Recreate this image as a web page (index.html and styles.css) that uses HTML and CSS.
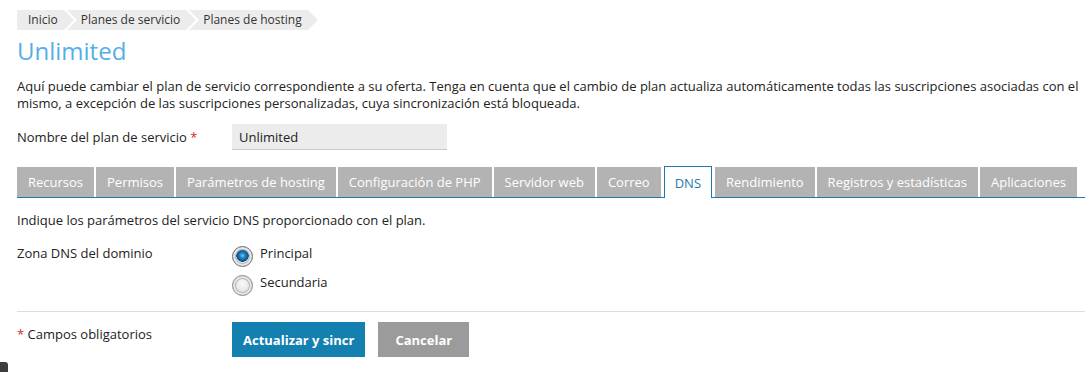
FILE: index.html
```html
<!DOCTYPE html>
<html lang="es">
<head>
    <meta charset="UTF-8">
    <title>Unlimited</title>
    <link rel="stylesheet" href="styles.css">
</head>
<body>
    <div class="page">
        <ul class="breadcrumbs">
            <li>Inicio</li>
            <li>Planes de servicio</li>
            <li>Planes de hosting</li>
        </ul>
        <h1>Unlimited</h1>
        <p class="hint">Aquí puede cambiar el plan de servicio correspondiente a su oferta. Tenga en cuenta que el cambio de plan actualiza automáticamente todas las suscripciones asociadas con el mismo, a excepción de las suscripciones personalizadas, cuya sincronización está bloqueada.</p>

        <div class="form-row name-row">
            <div class="field-label">Nombre del plan de servicio <span class="required">*</span></div>
            <div class="field"><input class="text-input" type="text" value="Unlimited"></div>
        </div>

        <div class="tabs">
            <div class="tab">Recursos</div>
            <div class="tab">Permisos</div>
            <div class="tab">Parámetros de hosting</div>
            <div class="tab">Configuración de PHP</div>
            <div class="tab">Servidor web</div>
            <div class="tab">Correo</div>
            <div class="tab active">DNS</div>
            <div class="tab">Rendimiento</div>
            <div class="tab">Registros y estadísticas</div>
            <div class="tab">Aplicaciones</div>
        </div>

        <p class="section-hint">Indique los parámetros del servicio DNS proporcionado con el plan.</p>

        <div class="form-row dns-row">
            <div class="field-label">Zona DNS del dominio</div>
            <div class="field radios">
                <label class="radio"><span class="radio-dot checked"></span>Principal</label>
                <label class="radio"><span class="radio-dot"></span>Secundaria</label>
            </div>
        </div>

        <div class="form-footer">
            <div class="field-label"><span class="required">*</span> Campos obligatorios</div>
            <div class="buttons">
                <button class="btn btn-primary">Actualizar y sincr</button>
                <button class="btn btn-cancel">Cancelar</button>
            </div>
        </div>
    </div>
    <div class="corner"></div>
</body>
</html>
```

FILE: styles.css
```css
body {
    margin: 0;
    font-family: 'Open Sans', 'Liberation Sans', sans-serif;
    font-size: 13px;
    color: #222;
    background: #fff;
    overflow: hidden;
}
.page {
    padding: 10px 0 0 17px;
}
.breadcrumbs {
    display: flex;
    list-style: none;
    margin: 0;
    padding: 0;
    font-size: 12px;
    line-height: 20px;
}
.breadcrumbs li {
    position: relative;
    background: #ececec;
    color: #333;
    padding: 0 6px 0 14px;
    margin-right: 3px;
}
.breadcrumbs li:first-child {
    padding-left: 11px;
}
.breadcrumbs li:before,
.breadcrumbs li:after {
    content: "";
    position: absolute;
    top: 0;
    border-top: 10px solid transparent;
    border-bottom: 10px solid transparent;
}
.breadcrumbs li:after {
    right: -10px;
    border-left: 10px solid #ececec;
    z-index: 1;
}
.breadcrumbs li:before {
    left: 0;
    border-left: 10px solid #fff;
}
.breadcrumbs li:first-child:before {
    display: none;
}
h1 {
    margin: 7px 0 0;
    font-size: 24px;
    font-weight: normal;
    line-height: 28px;
    color: #56aee8;
}
.hint {
    margin: 13px 0 0;
    line-height: 17px;
    padding-right: 4px;
}
.form-row {
    display: flex;
    align-items: flex-start;
}
.name-row {
    margin-top: 12px;
    align-items: center;
}
.field-label {
    width: 215px;
    flex-shrink: 0;
    line-height: 17px;
}
.required {
    color: #d02a2a;
}
.text-input {
    box-sizing: border-box;
    width: 215px;
    height: 26px;
    border: none;
    border-bottom: 1px solid #c8c8c8;
    background: #ececec;
    font-family: inherit;
    font-size: 13px;
    color: #222;
    padding: 0 7px;
}
.tabs {
    display: flex;
    gap: 2px;
    margin-top: 16px;
    border-bottom: 1px solid #1c7bab;
    height: 31px;
    align-items: flex-end;
}
.tab {
    background: #b3b3b3;
    color: #fff;
    padding: 0 11px;
    height: 30px;
    line-height: 30px;
    white-space: nowrap;
}
.tab.active {
    background: #fff;
    color: #1c7bab;
    border: 1px solid #1c7bab;
    border-bottom: none;
    height: 31px;
    margin: 0 1px -1px;
    line-height: 32px;
    padding: 0 10px;
}
.section-hint {
    margin: 14px 0 0;
    line-height: 17px;
}
.dns-row {
    margin-top: 16px;
}
.radios {
    display: flex;
    flex-direction: column;
    gap: 7px;
}
.radio {
    display: flex;
    align-items: flex-start;
    line-height: 17px;
}
.radio-dot {
    box-sizing: border-box;
    width: 21px;
    height: 21px;
    border-radius: 50%;
    border: 1px solid #8a8a8a;
    background: radial-gradient(circle at 50% 40%, #fafafa, #d2d2d2);
    box-shadow: inset 0 0 0 2px #e6e6e6, inset 0 0 0 3px #b8b8b8;
    margin: 1px 7px 0 0;
}
.radio-dot.checked {
    background: radial-gradient(circle at 50% 45%, #6fc4f2 0, #1a7cc0 3px, #0d4f86 6px, #e9e9e9 6.5px, #f3f3f3 100%);
    border-color: #6d6d6d;
}
.form-footer {
    display: flex;
    align-items: flex-start;
    margin-top: 15px;
    border-top: 1px solid #ddd;
    padding-top: 10px;
}
.form-footer .field-label {
    padding-top: 4px;
}
.buttons {
    display: flex;
    gap: 13px;
}
.btn {
    height: 35px;
    border: none;
    font-family: inherit;
    font-size: 13px;
    font-weight: bold;
    color: #fff;
    padding: 0 11px;
}
.btn-primary {
    background: #1380b0;
}
.btn-cancel {
    background: #9b9b9b;
    padding: 0 17px;
}
.corner {
    position: fixed;
    left: 0;
    bottom: 0;
    width: 8px;
    height: 10px;
    background: #3a3f44;
    border-radius: 0 3px 0 0;
}
```
